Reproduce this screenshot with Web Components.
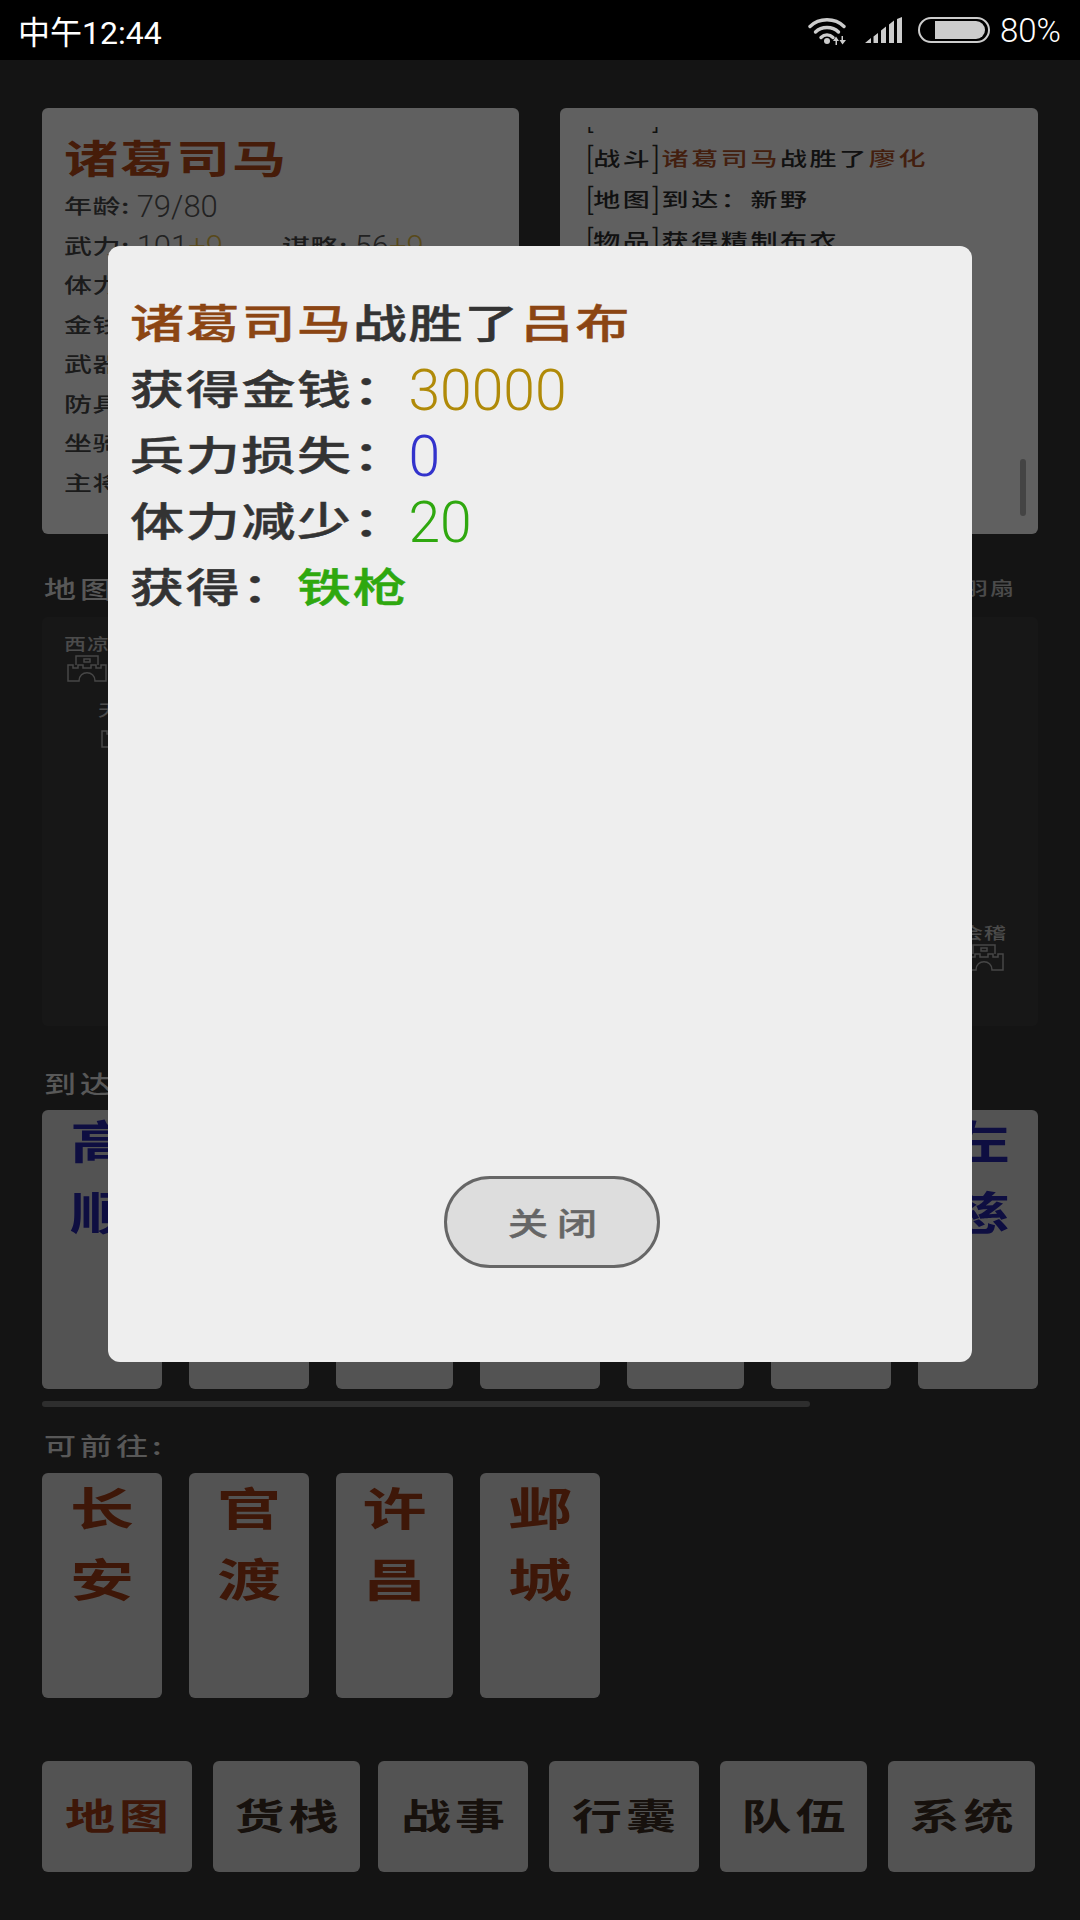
<!DOCTYPE html>
<html lang="zh">
<head>
<meta charset="utf-8">
<style>
  html, body { margin: 0; padding: 0; background: #333; }
  body { font-family: "Noto Sans CJK SC", "Noto Sans", sans-serif; }
</style>
</head>
<body>
<game-screen>
  <status-bar></status-bar>

  <div slot="top" class="top">
    <hero-card></hero-card>
    <log-card></log-card>
  </div>

  <section-label slot="map-label" right="羽扇">地图</section-label>
  <map-panel slot="map"></map-panel>

  <section-label slot="here-label">到达</section-label>
  <tile-row slot="here" height="279" color="#2424a4" scrollbar>
    <city-tile width="120" shift="-6">高<br>顺</city-tile>
    <city-tile width="120"></city-tile>
    <city-tile width="117"></city-tile>
    <city-tile width="120"></city-tile>
    <city-tile width="117"></city-tile>
    <city-tile width="120"></city-tile>
    <city-tile width="120" shift="-6">左<br>慈</city-tile>
  </tile-row>

  <section-label slot="go-label">可前往:</section-label>
  <tile-row slot="go" height="225" color="#9c3a14">
    <city-tile width="120" shift="-2">长<br>安</city-tile>
    <city-tile width="120" shift="-2">官<br>渡</city-tile>
    <city-tile width="117" shift="-2">许<br>昌</city-tile>
    <city-tile width="120" shift="-2">邺<br>城</city-tile>
  </tile-row>

  <tab-bar slot="tabs"></tab-bar>

  <result-modal slot="modal"></result-modal>
</game-screen>

<script>
class GameScreen extends HTMLElement {
    constructor() {
        super();
        this.attachShadow({ mode: 'open' });
    }

    connectedCallback() {
        this.shadowRoot.innerHTML = `
          <style>
            :host {
              display: block;
              position: relative;
              width: 1080px;
              height: 1920px;
              overflow: hidden;
              background: #333;
            }
            .main {
              display: flex;
              flex-direction: column;
              padding: 48px 42px 0;
            }
            .overlay {
              position: absolute;
              left: 0;
              right: 0;
              top: 60px;
              bottom: 0;
              background: rgba(0, 0, 0, 0.6);
            }
            .modal {
              position: absolute;
              left: 108px;
              top: 186px;
            }
            ::slotted([slot="top"]) {
              display: grid;
              grid-template-columns: 477px 478px;
              gap: 41px;
              height: 426px;
            }
            ::slotted([slot="map-label"]) { margin-top: 39px; }
            ::slotted([slot="map"]) { margin-top: 14px; }
            ::slotted([slot="here-label"]) { margin-top: 42px; }
            ::slotted([slot="here"]) { margin-top: 12px; }
            ::slotted([slot="go-label"]) { margin-top: 23px; }
            ::slotted([slot="go"]) { margin-top: 13px; }
            ::slotted([slot="tabs"]) { margin-top: 63px; }
          </style>
          <slot></slot>
          <div class="main">
            <slot name="top"></slot>
            <slot name="map-label"></slot>
            <slot name="map"></slot>
            <slot name="here-label"></slot>
            <slot name="here"></slot>
            <slot name="go-label"></slot>
            <slot name="go"></slot>
            <slot name="tabs"></slot>
          </div>
          <div class="overlay">
            <div class="modal"><slot name="modal"></slot></div>
          </div>
        `;
    }
}

class StatusBar extends HTMLElement {
    constructor() {
        super();
        this.attachShadow({ mode: 'open' });
    }

    connectedCallback() {
        this.shadowRoot.innerHTML = `
          <style>
            :host {
              display: flex;
              align-items: center;
              height: 60px;
              padding: 0 19px 0 18px;
              background: #000;
              color: #fff;
              font-family: Roboto, "Noto Sans CJK SC", sans-serif;
            }
            .time { font-size: 32px; flex: 1; }
            .icons { display: flex; align-items: center; }
            .pct { font-size: 33px; font-weight: 300; margin-left: 10px; }
            svg { display: block; }
          </style>
          <span class="time">中午12:44</span>
          <div class="icons">
            <svg width="40" height="30" viewBox="0 0 40 30" style="margin-right:17px">
              <g fill="none" stroke="#ccc" stroke-width="3.4" stroke-linecap="round">
                <path d="M2 11.5C11 2.5 27 2.5 36 11.5"/>
                <path d="M7.5 17C13.5 11 24.5 11 30.5 17"/>
                <path d="M13 22.500C16.500 19 21.500 19 25 22.500"/>
              </g>
              <circle cx="19" cy="26" r="3" fill="#ccc"/>
              <path d="M28 21.500 31 26H29V30H27.500V26H25ZM34.500 29.500 31.500 25H33.500V21H35V25H38Z" fill="#ccc"/>
            </svg>
            <svg width="38" height="26" viewBox="0 0 38 26" style="margin-right:15px">
              <path d="M0 26 L6 21 V26Z M8.500 26V19.500L13 16V26Z M16 26V13.500L21 9.500V26Z M24 26V7.500L29 3.500V26Z M32 26V2L37 0V26Z" fill="#ccc"/>
            </svg>
            <svg width="72" height="26" viewBox="0 0 72 26">
              <rect x="1" y="1" width="70" height="24" rx="12" fill="none" stroke="#ccc" stroke-width="2"/>
              <path d="M17 4H58A9 9 0 0 1 58 22H17Z" fill="#ccc"/>
            </svg>
            <span class="pct">80%</span>
          </div>
        `;
    }
}

class HeroCard extends HTMLElement {
    constructor() {
        super();
        this.attachShadow({ mode: 'open' });
    }

    connectedCallback() {
        const rows = ['体力:', '金钱:', '武器:', '防具:', '坐骑:', '主将:'];
        this.shadowRoot.innerHTML = `
          <style>
            :host {
              display: block;
              padding: 18px 22px 0;
              background: #f0f0f0;
              border-radius: 6px;
              color: #444;
              font-size: 28px;
              letter-spacing: 0.5px;
              font-weight: 500;
            }
            .c { display: inline-block; transform: scaleY(0.72); }
            .name {
              color: #b04618;
              font-size: 54px;
              line-height: 60px;
              letter-spacing: 2px;
              font-weight: 700;
            }
            .row { display: flex; height: 39.500px; line-height: 39.500px; white-space: nowrap; }
            .num {
              font-family: Roboto, sans-serif;
              font-size: 31px;
              font-weight: 300;
              letter-spacing: 0;
              color: #555;
            }
            .plus { color: #dcb642; }
            .half { width: 218px; }
          </style>
          <div class="name"><span class="c">诸葛司马</span></div>
          <div class="row"><span><span class="c">年龄:</span> <span class="num">79/80</span></span></div>
          <div class="row">
            <span class="half"><span class="c">武力:</span> <span class="num">101<span class="plus">+9</span></span></span>
            <span><span class="c">谋略:</span> <span class="num">56<span class="plus">+9</span></span></span>
          </div>
          ${rows.map(r => `<div class="row"><span class="c">${r}</span></div>`).join('')}
        `;
    }
}

class LogCard extends HTMLElement {
    constructor() {
        super();
        this.attachShadow({ mode: 'open' });
    }

    connectedCallback() {
        const tag = t => `<i>[</i><span class="c">${t}</span><i class="end">]</i>`;
        this.shadowRoot.innerHTML = `
          <style>
            :host {
              display: block;
              position: relative;
              background: #f0f0f0;
              border-radius: 6px;
              overflow: hidden;
              color: #2b2b2b;
              font-size: 27px;
              letter-spacing: 2.600px;
              font-weight: 500;
            }
            .c { display: inline-block; transform: scaleY(0.72); }
            .scroll {
              height: 388px;
              margin: 19px 26px 0;
              overflow: hidden;
            }
            .inner { margin-top: -31px; }
            .row { height: 41px; line-height: 41px; white-space: nowrap; }
            .row b { font-weight: 500; color: #a84f26; }
            i {
              font: 300 30px Roboto, sans-serif;
              letter-spacing: 0;
            }
            i.end { margin-right: 2px; }
            .bar {
              position: absolute;
              right: 12px;
              top: 351px;
              width: 6px;
              height: 57px;
              border-radius: 3px;
              background: #aaa;
            }
          </style>
          <div class="scroll">
            <div class="inner">
              <div class="row">${tag('地图')}<span class="c">到达：新野</span></div>
              <div class="row">${tag('战斗')}<span class="c"><b>诸葛司马</b>战胜了<b>廖化</b></span></div>
              <div class="row">${tag('地图')}<span class="c">到达：新野</span></div>
              <div class="row">${tag('物品')}<span class="c">获得精制布衣</span></div>
            </div>
          </div>
          <div class="bar"></div>
        `;
    }
}

class SectionLabel extends HTMLElement {
    constructor() {
        super();
        this.attachShadow({ mode: 'open' });
    }

    connectedCallback() {
        const right = this.getAttribute('right');
        this.shadowRoot.innerHTML = `
          <style>
            :host {
              display: flex;
              justify-content: space-between;
              align-items: center;
              height: 30px;
              padding: 0 22px 0 2px;
              color: #dcdcdc;
              font-size: 32px;
              line-height: 30px;
              font-weight: 500;
              letter-spacing: 4px;
            }
            .c { display: inline-block; transform: scaleY(0.74); white-space: nowrap; }
            .right { font-size: 24px; letter-spacing: 2px; color: #bbb; }
          </style>
          <span class="c"><slot></slot></span>
          ${right ? `<span class="c right">${right}</span>` : ''}
        `;
    }
}

const CASTLE = `
  <svg width="40" height="27" viewBox="0 0 40 27">
    <path d="M9 10V1H31V10M17 4H23V7H17ZM1 26V10H6V13H11V10H16V13H24V10H29V13H34V10H39V26H28C28 15 12 15 12 26Z"
      fill="none" stroke="#b0b0b0" stroke-width="1.500"/>
  </svg>`;

class MapPanel extends HTMLElement {
    constructor() {
        super();
        this.attachShadow({ mode: 'open' });
    }

    connectedCallback() {
        const nodes = [
            ['西凉', 22, 14],
            ['天水', 56, 80],
            ['会稽', 919, 303]
        ];
        this.shadowRoot.innerHTML = `
          <style>
            :host {
              display: block;
              position: relative;
              height: 409px;
              background: #3b3b3b;
              border-radius: 6px;
            }
            .node {
              position: absolute;
              display: flex;
              flex-direction: column;
              align-items: center;
              width: 46px;
              color: #bbb;
              font-size: 22px;
              line-height: 24px;
              letter-spacing: 1px;
              font-weight: 500;
            }
            .c { display: block; white-space: nowrap; transform: scaleY(0.74); }
            svg { display: block; }
          </style>
          ${nodes.map(n => `
            <div class="node" style="left:${n[1]}px;top:${n[2]}px">
              <span class="c">${n[0]}</span>${CASTLE}
            </div>`).join('')}
        `;
    }
}

class TileRow extends HTMLElement {
    constructor() {
        super();
        this.attachShadow({ mode: 'open' });
    }

    connectedCallback() {
        const height = this.getAttribute('height');
        const color = this.getAttribute('color');
        const bar = this.hasAttribute('scrollbar');
        this.shadowRoot.innerHTML = `
          <style>
            :host { display: block; color: ${color}; }
            .tiles { display: flex; gap: 27px; height: ${height}px; }
            .bar {
              width: 768px;
              height: 6px;
              margin-top: 12px;
              border-radius: 3px;
              background: #737373;
            }
          </style>
          <div class="tiles"><slot></slot></div>
          ${bar ? '<div class="bar"></div>' : ''}
        `;
    }
}

class CityTile extends HTMLElement {
    constructor() {
        super();
        this.attachShadow({ mode: 'open' });
    }

    connectedCallback() {
        const shift = this.getAttribute('shift') || 0;
        this.shadowRoot.innerHTML = `
          <style>
            :host {
              display: block;
              box-sizing: border-box;
              width: ${this.getAttribute('width')}px;
              background: #d0d0d0;
              border-radius: 6px;
              text-align: center;
              font-size: 64px;
              line-height: 100px;
              font-weight: 700;
            }
            .c {
              margin-top: ${shift}px;
              transform: scaleY(0.71);
              transform-origin: top center;
            }
          </style>
          <div class="c"><slot></slot></div>
        `;
    }
}

class TabBar extends HTMLElement {
    constructor() {
        super();
        this.attachShadow({ mode: 'open' });
    }

    connectedCallback() {
        const tabs = [['地图', 150], ['货栈', 147], ['战事', 150], ['行囊', 150], ['队伍', 147], ['系统', 147]];
        this.shadowRoot.innerHTML = `
          <style>
            :host { display: flex; gap: 21px; }
            .tab {
              display: flex;
              align-items: center;
              justify-content: center;
              box-sizing: border-box;
              height: 111px;
              padding: 0 0 6px 4px;
              background: #d0d0d0;
              border-radius: 6px;
              color: #3a2c22;
              font-size: 50px;
              font-weight: 700;
              letter-spacing: 4px;
            }
            .tab.on { color: #9c3a14; }
            .tab:nth-child(4) { margin-left: -3px; }
            .c { transform: scaleY(0.72); white-space: nowrap; }
          </style>
          ${tabs.map((t, i) => `<div class="tab${i === 0 ? ' on' : ''}" style="width:${t[1]}px"><span class="c">${t[0]}</span></div>`).join('')}
        `;
    }
}

class ResultModal extends HTMLElement {
    constructor() {
        super();
        this.attachShadow({ mode: 'open' });
    }

    connectedCallback() {
        const num = (text, color) => `<span class="num" style="color:${color}">${text}</span>`;
        this.shadowRoot.innerHTML = `
          <style>
            :host {
              display: flex;
              flex-direction: column;
              box-sizing: border-box;
              width: 864px;
              height: 1116px;
              padding: 42px 22px 0;
              background: #eee;
              border-radius: 12px;
              color: #333;
              font-size: 54px;
              letter-spacing: 1.700px;
              font-weight: 500;
            }
            .c {
              display: inline-block;
              transform: scaleY(0.74);
              -webkit-text-stroke: 0.6px currentColor;
            }
            .line { height: 66px; line-height: 66px; white-space: nowrap; }
            .title b { font-weight: 500; color: #8b4513; }
            .num {
              font-family: Roboto, sans-serif;
              font-size: 57px;
              font-weight: 300;
              letter-spacing: 0;
            }
            .item { color: #2fa80f; }
            .foot { flex: 1; display: flex; justify-content: center; }
            button {
              box-sizing: border-box;
              width: 216px;
              height: 92px;
              margin-top: 558px;
              margin-left: 24px;
              padding: 0 0 0 10px;
              border: 3px solid #666;
              border-radius: 46px;
              background: #ddd;
              color: #666;
              font: 500 40px "Noto Sans CJK SC", sans-serif;
              letter-spacing: 9px;
            }
            button span { display: inline-block; transform: scaleY(0.78); -webkit-text-stroke: 0.5px currentColor; }
          </style>
          <div class="line title"><span class="c"><b>诸葛司马</b>战胜了<b>吕布</b></span></div>
          <div class="line"><span class="c">获得金钱：</span>${num('30000', '#b08a08')}</div>
          <div class="line"><span class="c">兵力损失：</span>${num('0', '#3333cc')}</div>
          <div class="line"><span class="c">体力减少：</span>${num('20', '#2fa80f')}</div>
          <div class="line"><span class="c">获得：</span><span class="c item">铁枪</span></div>
          <div class="foot"><button><span>关闭</span></button></div>
        `;
    }
}

customElements.define('game-screen', GameScreen);
customElements.define('status-bar', StatusBar);
customElements.define('hero-card', HeroCard);
customElements.define('log-card', LogCard);
customElements.define('section-label', SectionLabel);
customElements.define('map-panel', MapPanel);
customElements.define('tile-row', TileRow);
customElements.define('city-tile', CityTile);
customElements.define('tab-bar', TabBar);
customElements.define('result-modal', ResultModal);
</script>
</body>
</html>
